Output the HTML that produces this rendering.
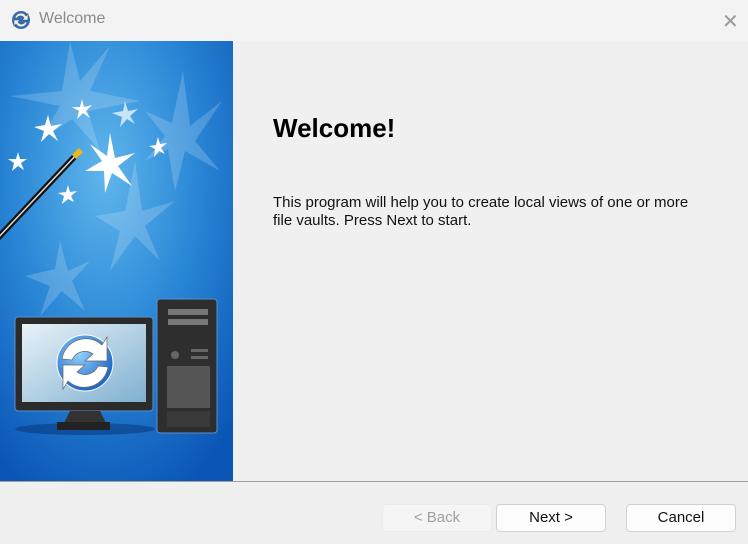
<!DOCTYPE html>
<html><head><meta charset="utf-8"><style>
*{margin:0;padding:0;box-sizing:border-box}
body{width:748px;height:544px;background:#f0f0f0;font-family:"Liberation Sans",Arial,sans-serif;position:relative;overflow:hidden}
.title{position:absolute;left:0;top:0;width:748px;height:41px;background:#f3f3f3}
.title span{position:absolute;left:39px;top:10px;font-size:16px;color:#8a8a8a}
.x{position:absolute;left:722px;top:9px;font-size:20px;color:#999}
.banner{position:absolute;left:0;top:41px;width:233px;height:440px}
.sep{position:absolute;left:0;top:481px;width:748px;height:1px;background:#a0a0a0}
h1{position:absolute;left:273px;top:113px;font-size:26px;font-weight:bold;color:#000}
p{position:absolute;left:273px;top:194px;font-size:15px;line-height:18px;color:#111;width:428px}
.btn{position:absolute;top:504px;width:110px;height:28px;border:1px solid #d0d0d0;border-radius:4px;background:#fdfdfd;font-size:15px;text-align:center;line-height:26px;color:#111}
.dis{background:#f5f5f5;color:#a0a0a0;border-color:#ececec}
</style></head><body>
<div class="title">
<svg style="position:absolute;left:10px;top:9px" width="22" height="22" viewBox="0 0 22 22"><circle cx="11" cy="11" r="9" fill="#2a6fc0"/><path d="M5 9a6 6 0 0 1 11-2l2-2v6h-6l2-2a4 4 0 0 0-7 0z M17 13a6 6 0 0 1-11 2l-2 2v-6h6l-2 2a4 4 0 0 0 7 0z" fill="#eee" stroke="#555" stroke-width=".6"/></svg>
<span>Welcome</span><div class="x">✕</div></div>
<svg class="banner" viewBox="0 0 233 440">
<defs>
<radialGradient id="g" cx="0.45" cy="0.3" r="0.8"><stop offset="0" stop-color="#5fb6ec"/><stop offset="0.5" stop-color="#2a86d6"/><stop offset="1" stop-color="#0a55b5"/></radialGradient>
<linearGradient id="s" x1="0" y1="0" x2="1" y2="1"><stop offset="0" stop-color="#e8f2f8"/><stop offset="1" stop-color="#7fb0d0"/></linearGradient>
<radialGradient id="b" cx="0.4" cy="0.35" r="0.7"><stop offset="0" stop-color="#8fd0ff"/><stop offset="1" stop-color="#1660c0"/></radialGradient>
</defs>
<rect width="233" height="440" fill="url(#g)"/>
<g fill="#ffffff" opacity="0.18">
<path d="M70 0 L80 40 L110 5 L90 50 L140 60 L88 70 L100 110 L72 78 L40 100 L60 65 L10 55 L62 50Z"/>
<path d="M183 30 L190 85 L222 60 L195 100 L220 130 L185 110 L175 150 L168 108 L145 120 L165 95 L145 70 L172 82Z"/>
<path d="M135 120 L142 170 L175 160 L145 185 L160 220 L135 195 L110 230 L120 190 L95 175 L125 170Z"/>
<path d="M60 200 L68 230 L90 220 L72 240 L85 270 L62 250 L40 275 L50 245 L25 235 L55 228Z"/>
</g>
<g fill="#fff">
<path d="M110 92 L115 117 L135 112 L118 125 L132 145 L112 132 L105 152 L104 130 L85 130 L102 120 L90 103 L107 115Z"/>
<path d="M48 74 L51 85 L62 83 L53 90 L58 100 L49 93 L41 101 L44 90 L34 86 L45 84Z"/>
<path d="M82 58 L84 66 L92 64 L86 70 L90 77 L83 72 L77 78 L79 70 L72 66 L80 66Z"/>
<path d="M125 60 L128 70 L138 68 L130 75 L135 83 L127 78 L120 86 L122 76 L112 72 L123 70Z" opacity=".7"/>
<path d="M158 96 L160 103 L167 102 L161 107 L165 113 L159 110 L154 116 L155 108 L149 105 L156 104Z"/>
<path d="M18 111 L20 118 L27 118 L21 122 L24 129 L18 125 L12 130 L14 122 L8 118 L16 118Z"/>
<path d="M68 144 L70 151 L77 150 L71 155 L74 161 L68 158 L62 163 L64 155 L58 152 L66 151Z"/>
</g>
<line x1="-5" y1="200" x2="78" y2="112" stroke="#111" stroke-width="6"/>
<line x1="-5" y1="200" x2="78" y2="112" stroke="#ddd" stroke-width="1.5"/>
<line x1="74" y1="116" x2="81" y2="109" stroke="#e8b820" stroke-width="6"/>
<ellipse cx="85" cy="388" rx="70" ry="6" fill="#083a80" opacity=".6"/>
<rect x="15" y="276" width="138" height="94" rx="3" fill="#2b2b2b" stroke="#5a8fd0"/>
<rect x="22" y="283" width="124" height="78" fill="url(#s)"/>
<path d="M70 370 h30 l6 12 h-42z" fill="#333"/>
<rect x="57" y="381" width="53" height="8" fill="#222"/>
<circle cx="85" cy="322" r="28" fill="url(#b)" stroke="#fff" stroke-width="1"/>
<path d="M62 318 a24 24 0 0 1 40-14 l5-8 v24 h-22 l8-7 a14 14 0 0 0-21 6z" fill="#fff" stroke="#666" stroke-width=".7"/>
<path d="M108 326 a24 24 0 0 1-40 14 l-5 8 v-24 h22 l-8 7 a14 14 0 0 0 21-6z" fill="#fff" stroke="#666" stroke-width=".7"/>
<rect x="157" y="258" width="60" height="134" rx="3" fill="#2e2e2e" stroke="#5a8fd0"/>
<rect x="168" y="268" width="40" height="6" fill="#777"/>
<rect x="168" y="278" width="40" height="6" fill="#777"/>
<circle cx="175" cy="314" r="4" fill="#666"/>
<rect x="191" y="308" width="17" height="3" fill="#666"/><rect x="191" y="315" width="17" height="3" fill="#666"/>
<rect x="167" y="325" width="43" height="42" fill="#555"/>
<rect x="167" y="370" width="43" height="16" fill="#3a3a3a"/>
</svg>
<div class="sep"></div>
<h1>Welcome!</h1>
<p>This program will help you to create local views of one or more file vaults. Press Next to start.</p>
<div class="btn dis" style="left:382px">&lt; Back</div>
<div class="btn" style="left:496px">Next &gt;</div>
<div class="btn" style="left:626px">Cancel</div>
</body></html>
